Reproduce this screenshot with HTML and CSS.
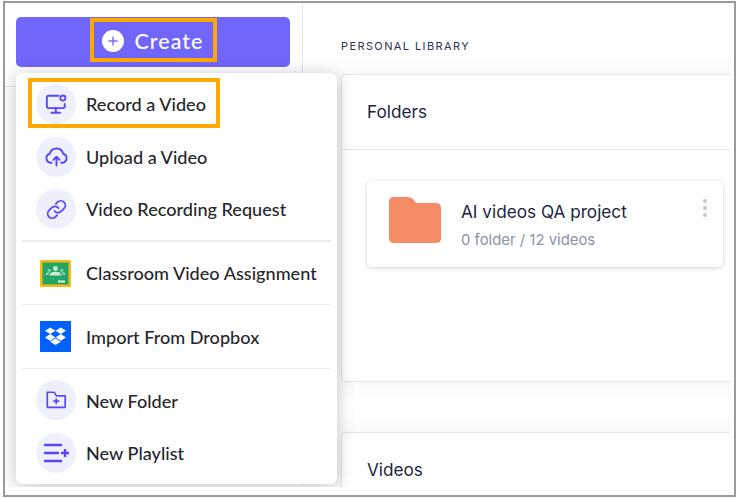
FILE: index.html
```html
<!DOCTYPE html>
<html lang="en">
<head>
<meta charset="utf-8">
<title>Personal Library</title>
<link rel="stylesheet" href="styles.css">
</head>
<body>
<div class="window">
  <div class="viewport">
    <aside class="sidebar">
      <div class="sidebar-head">
        <button class="create-btn" type="button">
          <span class="create-mark">
            <svg class="create-icon" viewBox="0 0 22 22" width="22" height="22"><circle cx="11" cy="11" r="11" fill="#fff"/><path d="M11 6.500v9M6.500 11h9" stroke="#7166fb" stroke-width="1.300" fill="none"/></svg>
            <span>Create</span>
          </span>
        </button>
      </div>
    </aside>
    <main class="main">
      <h1 class="lib-title">PERSONAL LIBRARY</h1>
      <section class="panel panel-folders">
        <h2 class="panel-title">Folders</h2>
        <div class="panel-body">
          <article class="folder-card">
            <svg class="folder-icon" viewBox="0 0 52 46" width="52" height="46"><path d="M5 0h14q3.500 0 5.500 2.500L27 6h20q5 0 5 5v30q0 5-5 5H5q-5 0-5-5V5q0-5 5-5z" fill="#f58c65"/></svg>
            <div class="folder-text">
              <div class="folder-name">AI videos QA project</div>
              <div class="folder-meta">0 folder / 12 videos</div>
            </div>
            <div class="folder-dots"><i></i><i></i><i></i></div>
          </article>
        </div>
      </section>
      <section class="panel panel-videos">
        <h2 class="panel-title">Videos</h2>
      </section>
    </main>

    <nav class="menu">
      <div class="menu-group menu-group-first">
        <a class="menu-item"><span class="bubble">
          <svg viewBox="0 0 24 24" width="22" height="22" fill="none" stroke="#5548f8" stroke-width="2" stroke-linecap="round" stroke-linejoin="round"><path d="M14.500 3H4a2 2 0 0 0-2 2v9.500a2 2 0 0 0 2 2h15.500a2 2 0 0 0 2-2V12"/><circle cx="19.500" cy="5.500" r="2.800"/><path d="M11.800 16.500v4.500M7 21.500h9.500"/></svg>
        </span><span>Record a Video</span></a>
        <a class="menu-item"><span class="bubble">
          <svg viewBox="0 0 24 24" width="23" height="23" fill="none" stroke="#5548f8" stroke-width="2" stroke-linecap="round" stroke-linejoin="round"><path d="M7 18.500H6a4.800 4.800 0 0 1-1-9.400A7.200 7.200 0 0 1 19 9.100a4.800 4.800 0 0 1-1 9.400h-1"/><path d="M12 21.500v-9M8.800 15.500 12 12.300l3.200 3.200"/></svg>
        </span><span>Upload a Video</span></a>
        <a class="menu-item"><span class="bubble">
          <svg viewBox="0 0 24 24" width="23" height="23" fill="none" stroke="#5548f8" stroke-width="1.900" stroke-linecap="round" stroke-linejoin="round"><path d="M10 13.500a4.500 4.500 0 0 0 6.800.5l3-3a4.700 4.700 0 0 0-6.700-6.700l-1.700 1.700"/><path d="M14 10.500a4.500 4.500 0 0 0-6.800-.5l-3 3a4.700 4.700 0 0 0 6.700 6.700l1.700-1.700"/></svg>
        </span><span>Video Recording Request</span></a>
      </div>
      <div class="menu-group menu-group-classroom">
        <a class="menu-item"><span class="brand">
          <svg viewBox="0 0 31 27" width="31" height="27"><rect width="31" height="27" rx="1.500" fill="#f9ba14"/><rect x="2.500" y="2.500" width="26" height="22" fill="#23a566"/><g fill="#cfeadb"><circle cx="15.500" cy="8.500" r="2.400"/><path d="M9.500 15.500q0-3.800 6-3.800t6 3.800z"/><circle cx="9.200" cy="10.300" r="1.600" opacity=".6"/><circle cx="21.800" cy="10.300" r="1.600" opacity=".6"/><path d="M5.500 15q0-3 3.500-3l1 .2q-1.500 1-1.600 2.800zM25.500 15q0-3-3.500-3l-1 .2q1.500 1 1.600 2.800z" opacity=".6"/></g><rect x="18" y="20.500" width="7" height="2" fill="#e9f6ef"/></svg>
        </span><span>Classroom Video Assignment</span></a>
      </div>
      <div class="menu-group menu-group-dropbox">
        <a class="menu-item"><span class="brand">
          <svg viewBox="0 0 31 31" width="31" height="31"><rect width="31" height="31" fill="#0061fe"/><path fill="#fff" d="M10.200 6.500 5 9.800l5.200 3.300 5.300-3.300zM20.800 6.500l-5.300 3.300 5.300 3.300 5.200-3.300zM5 16.400l5.200 3.300 5.300-3.300-5.300-3.300zM20.800 13.100l-5.300 3.300 5.300 3.300 5.200-3.300zM10.200 20.800l5.300 3.300 5.300-3.300-5.300-3.300z"/></svg>
        </span><span>Import From Dropbox</span></a>
      </div>
      <div class="menu-group menu-group-last">
        <a class="menu-item"><span class="bubble">
          <svg viewBox="0 0 24 24" width="22" height="22" fill="none" stroke="#5548f8" stroke-width="1.800" stroke-linejoin="round"><path d="M2.500 3.500h7.500l2.500 4h9.500V20H2.500z"/><path d="M12.200 10v6.500M9 13.200h6.500"/></svg>
        </span><span class="menu-label-low">New Folder</span></a>
        <a class="menu-item"><span class="bubble">
          <svg viewBox="0 0 26 20" width="26" height="20" fill="none" stroke="#5548f8" stroke-width="2.400"><path d="M1 2h18M1 10h15M1 18h18M18 10h8M22 6v8"/></svg>
        </span><span>New Playlist</span></a>
      </div>
    </nav>

    <div class="annotation annotation-record"></div>
  </div>
</div>
</body>
</html>
```

FILE: styles.css
```css
* { box-sizing: border-box; }
html, body { margin: 0; padding: 0; background: #fff; }
body { padding: 1px 1px 1px 3px; overflow: hidden; }

.window {
  width: 733px;
  height: 496px;
  border: 2px solid #9a9a9a;
  background: #fff;
  padding: 0 4px 8px 0;
}
.viewport {
  position: relative;
  display: flex;
  width: 100%;
  height: 100%;
  overflow: hidden;
}

.sidebar {
  flex: 0 0 298px;
  border-right: 1px solid #e4e4f0;
  background: #fff;
}
.sidebar-head {
  height: 84px;
  padding: 14px 12px 0 11px;
  border-bottom: 1px solid #e4e4f0;
}
.create-btn {
  display: flex;
  align-items: center;
  justify-content: center;
  width: 274px;
  height: 50px;
  padding: 0;
  border: 0;
  border-radius: 5px;
  background: #7166fb;
  color: #fff;
  font: 500 21.500px "Lato", sans-serif;
  letter-spacing: 1px;
}
.create-mark {
  display: flex;
  align-items: center;
  gap: 11px;
  width: 127px;
  height: 44px;
  margin-top: -5px;
  padding: 2px 0 0 8px;
  border: 4px solid #ffa800;
}
.create-icon { flex: none; }

.main {
  flex: 1;
  min-width: 0;
  padding-left: 38px;
  background: #fff;
}
.lib-title {
  margin: 0;
  padding-top: 36px;
  height: 71px;
  color: #2b3350;
  font: 400 11px/14px "Inter", sans-serif;
  letter-spacing: 1.400px;
}
.panel {
  width: 460px;
  border: 1px solid #e4e4f0;
  border-right: 0;
  border-radius: 5px 0 0 5px;
  background: #fff;
  box-shadow: 0 0 24px rgba(30, 30, 60, .06);
}
.panel-folders { height: 308px; margin-bottom: 50px; }
.panel-videos { height: 80px; }
.panel-title {
  margin: 0;
  padding-left: 25px;
  height: 75px;
  border-bottom: 1px solid #e4e4f0;
  color: #1c2540;
  font: 400 17.200px/73px "Inter", sans-serif;
}
.panel-videos .panel-title { border-bottom: 0; }
.panel-body { padding: 31px 0 0 25px; }

.folder-card {
  position: relative;
  display: flex;
  width: 356px;
  height: 86px;
  padding: 16px 0 0 22px;
  border-radius: 5px;
  background: #fff;
  box-shadow: 0 1px 4px rgba(30, 30, 60, .2);
}
.folder-icon { flex: none; }
.folder-text { margin-left: 20px; }
.folder-name {
  margin-top: 5px;
  color: #1c2540;
  font: 400 17.200px/20px "Inter", sans-serif;
}
.folder-meta {
  margin-top: 9px;
  color: #8a93a8;
  font: 400 14.900px/18px "Inter", sans-serif;
}
.folder-dots {
  position: absolute;
  top: 18px;
  right: 16px;
  display: flex;
  flex-direction: column;
  gap: 3px;
}
.folder-dots i {
  width: 4px;
  height: 4px;
  border-radius: 50%;
  background: #c3c6d2;
}

.menu {
  position: absolute;
  left: 11px;
  top: 70px;
  width: 321px;
  height: 411px;
  padding: 0 6px;
  border-radius: 7px;
  background: #fff;
  box-shadow: 0 2px 18px rgba(0, 0, 0, .24);
}
.menu-group { border-bottom: 1px solid #ececf0; }
.menu-group-first { height: 169px; padding-top: 11px; border-bottom-width: 2px; }
.menu-group-classroom { height: 63px; }
.menu-group-dropbox { height: 64px; }
.menu-group-last { border-bottom: 0; padding-top: 11px; }
.menu-group-first .menu-item + .menu-item { margin-top: 12.500px; }
.menu-group-last .menu-item + .menu-item { margin-top: 13px; }
.menu-group-classroom .menu-item { height: 62px; }
.menu-group-dropbox .menu-item { height: 63px; }
.menu-item {
  display: flex;
  align-items: center;
  height: 40px;
  color: #26262b;
  font: 500 18.100px "Lato", sans-serif;
}
.menu-label-low { padding-top: 2px; }
.bubble, .brand {
  display: flex;
  flex: none;
  align-items: center;
  justify-content: center;
  height: 40px;
}
.bubble {
  width: 40px;
  margin: 0 10px 0 14px;
  border-radius: 50%;
  background: #f0effe;
}
.brand {
  width: 31px;
  margin: 0 15px 0 18px;
}

.annotation {
  position: absolute;
  border: 4px solid #ffa800;
}
.annotation-record {
  left: 23px;
  top: 75px;
  width: 192px;
  height: 50px;
}
```
